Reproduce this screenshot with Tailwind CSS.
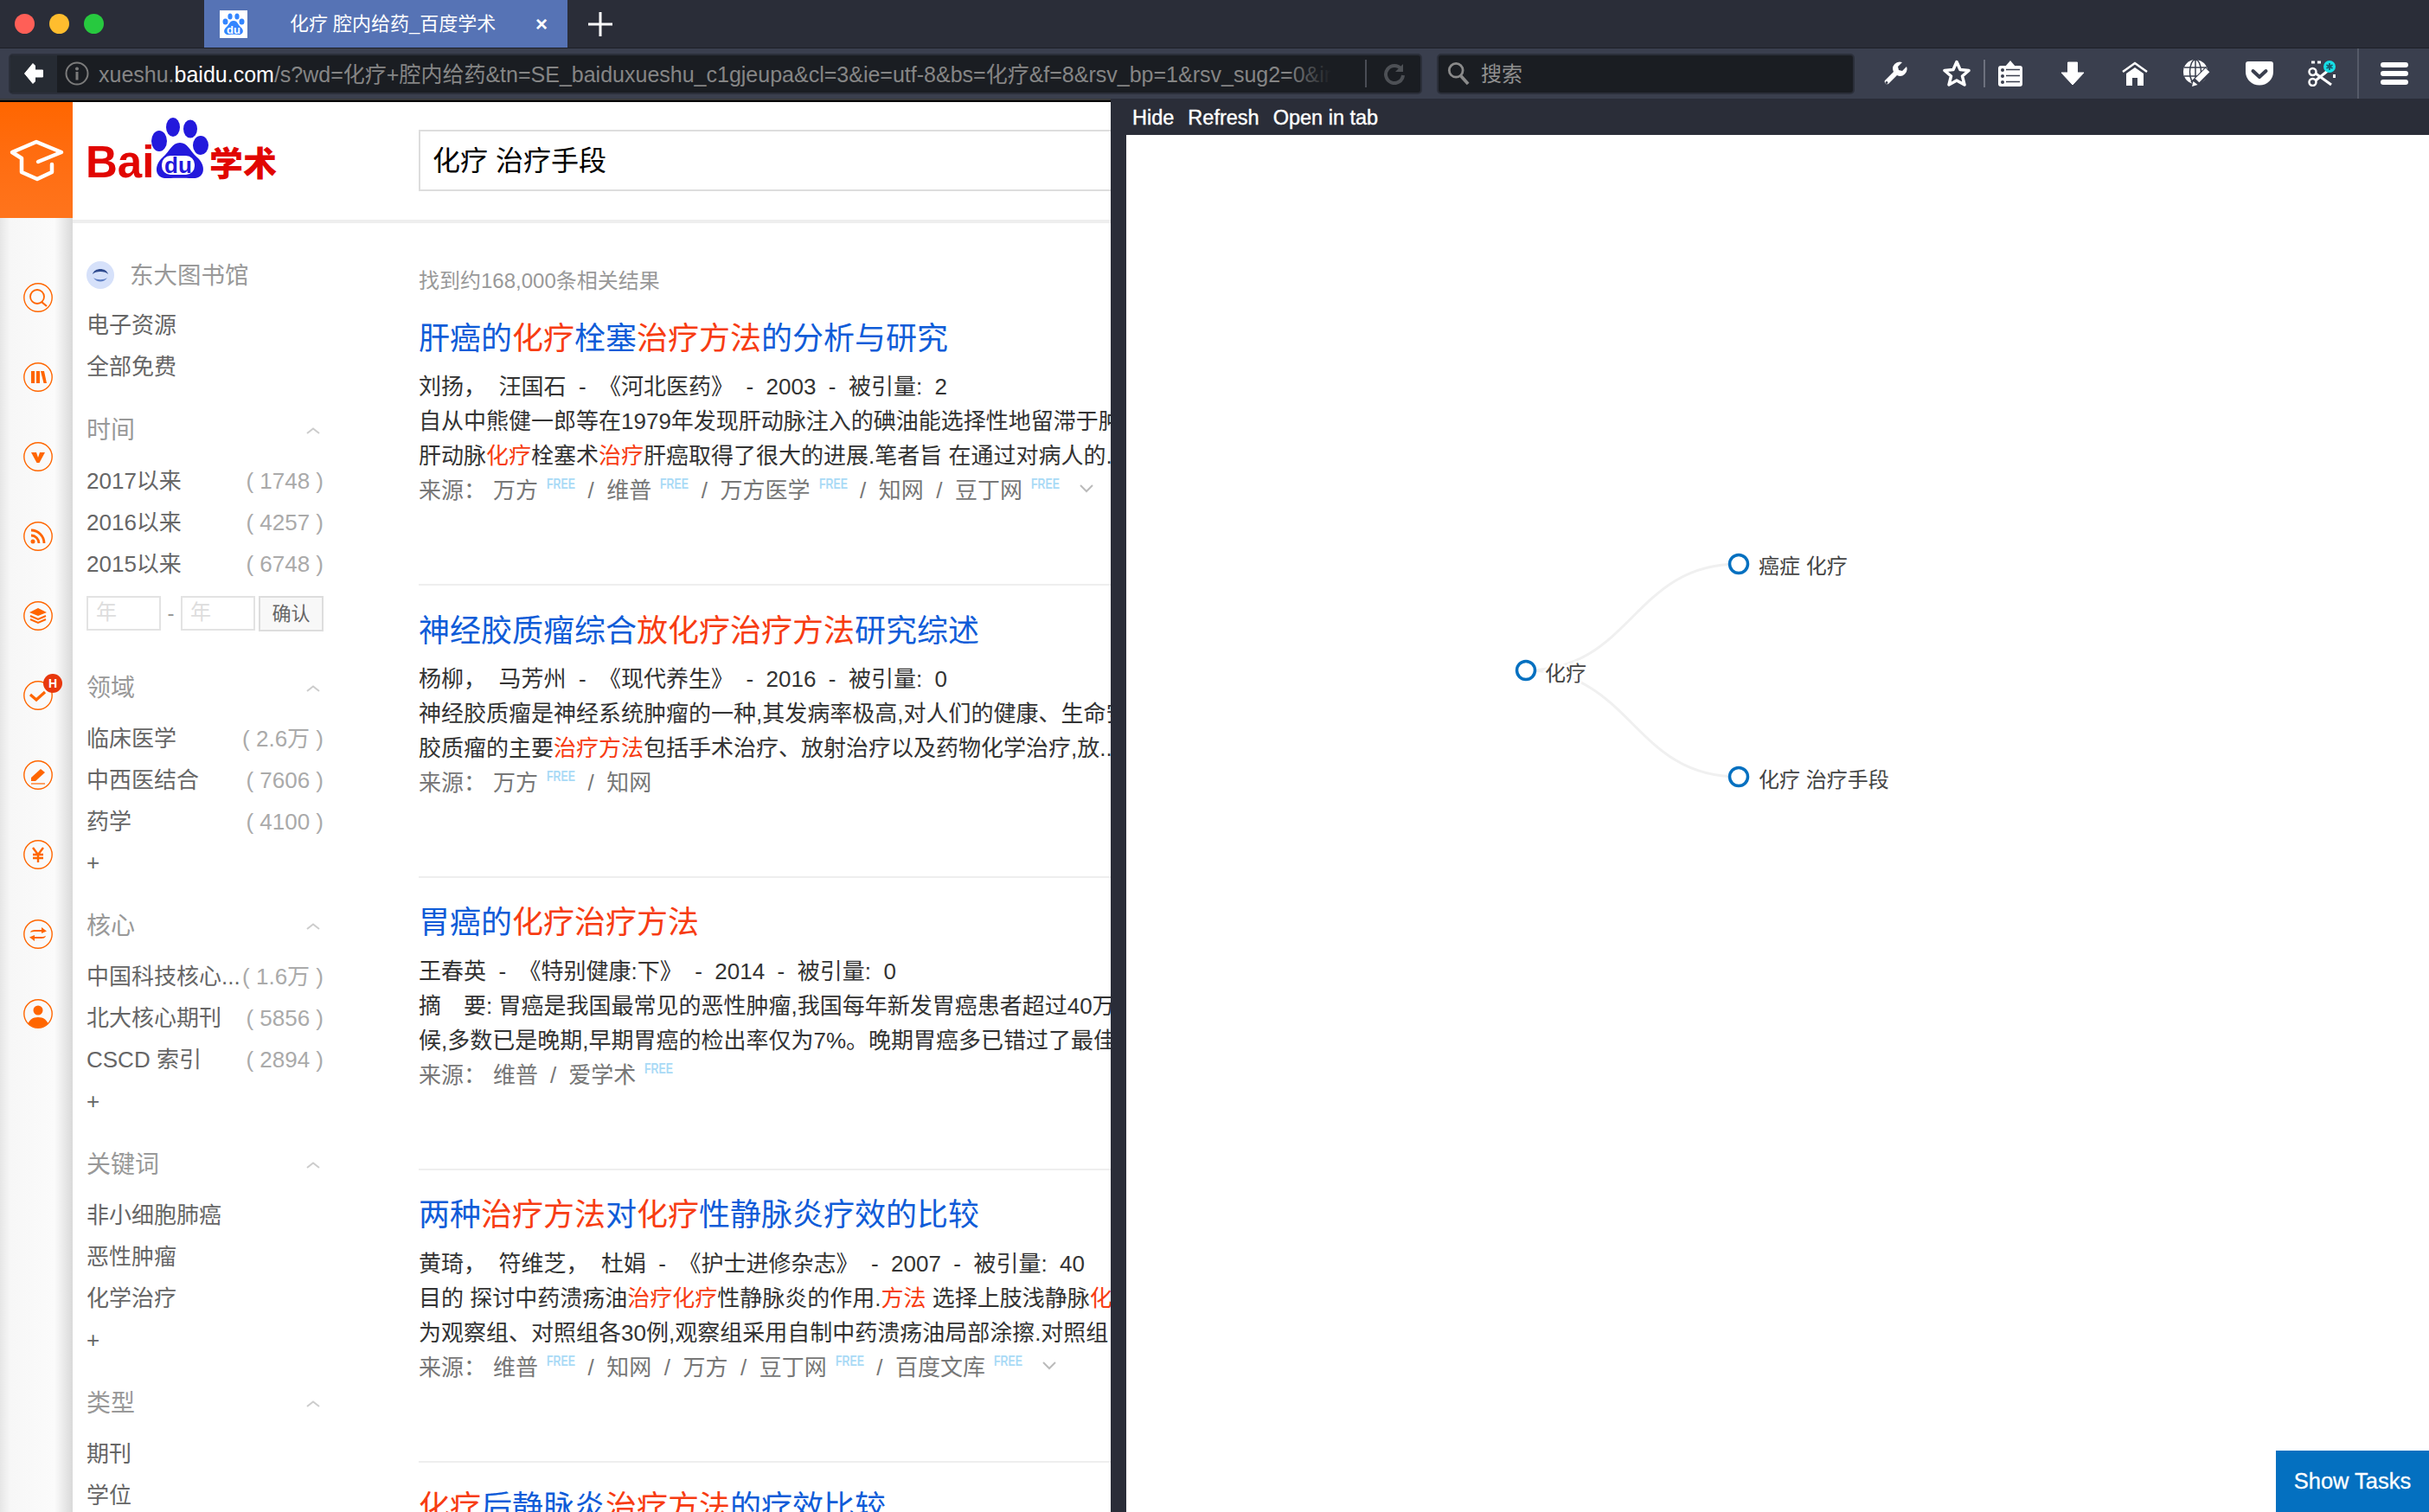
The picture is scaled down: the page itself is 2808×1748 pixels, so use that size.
<!DOCTYPE html>
<html lang="zh-CN">
<head>
  <meta charset="UTF-8">
  <title>化疗 腔内给药_百度学术</title>
  <script src="https://cdn.jsdelivr.net/npm/@tailwindcss/browser@4"></script>
</head>
<body class="w-[2808px] h-[1748px] overflow-hidden flex flex-col bg-white [font-family:'Liberation_Sans','Noto_Sans_CJK_SC',sans-serif]">

  <!-- Tab strip -->
  <div class="h-[56px] shrink-0 flex bg-[#2a2d38] border-b border-b-[#1d2028] border-t-0">
    <div class="flex items-center w-[236px] pl-[17px] gap-[17px]">
      <span class="w-[23px] h-[23px] rounded-full bg-[#ff5f57]"></span>
      <span class="w-[23px] h-[23px] rounded-full bg-[#ffbd2e]"></span>
      <span class="w-[23px] h-[23px] rounded-full bg-[#27c93f]"></span>
    </div>
    <div class="w-[420px] h-[55px] bg-[#5673b5] flex items-center text-white text-[22px]">
      <div class="ml-[18px] w-[32px] h-[32px] bg-white">
        <svg viewBox="0 0 32 32" class="w-[32px] h-[32px]">
          <ellipse cx="12" cy="7" rx="2.6" ry="3.6" fill="#3385ff"/>
          <ellipse cx="20" cy="7" rx="2.6" ry="3.6" fill="#3385ff"/>
          <ellipse cx="6.5" cy="13" rx="3" ry="3.6" fill="#3385ff"/>
          <ellipse cx="25.5" cy="13" rx="3" ry="3.6" fill="#3385ff"/>
          <path d="M16 12 C21 12 21 17 25 20 C29 24 26 29 21 28 C18 27.500 14 27.500 11 28 C6 29 3 24 7 20 C11 17 11 12 16 12Z" fill="#3385ff"/>
          <text x="16" y="26.500" text-anchor="middle" font-size="13" font-weight="700" fill="#fff">du</text>
        </svg>
      </div>
      <span class="ml-[49px] w-[236px] whitespace-nowrap">化疗 腔内给药_百度学术</span>
      <span class="ml-[48px] font-bold text-[24px] leading-none">×</span>
    </div>
    <svg viewBox="0 0 28 28" class="ml-[24px] mt-[14px] w-[28px] h-[28px]"><path d="M14 0V28M0 14H28" stroke="#fff" stroke-width="3"/></svg>
  </div>

  <!-- Navigation toolbar -->
  <div class="h-[58px] shrink-0 flex items-center bg-[#3a3f4e] pl-[10px]">
    <div class="w-[1634px] h-[47px] flex items-center bg-[#1a1d22] border-2 border-[#2b2f3a] rounded-[5px] overflow-hidden">
      <div class="w-[54px] h-full shrink-0 flex items-center justify-center bg-[#262b33]">
        <svg viewBox="0 0 24 26" class="w-[24px] h-[26px]"><path d="M11 1.500 L1.500 13 L11 24.500 L13.500 22 V17 H22.500 V9 H13.500 V4Z" fill="#fff" stroke="#fff" stroke-linejoin="round"/></svg>
      </div>
      <svg viewBox="0 0 28 28" class="ml-[9px] shrink-0 w-[28px] h-[28px]">
        <circle cx="14" cy="14" r="12.500" fill="none" stroke="#7b7b7b" stroke-width="2"/>
        <circle cx="14" cy="8.500" r="2" fill="#7b7b7b"/>
        <rect x="12.500" y="12" width="3" height="9.500" fill="#7b7b7b"/>
      </svg>
      <div class="relative ml-[11px] w-[1425px] shrink-0 overflow-hidden whitespace-nowrap text-[25px] leading-[40px] pt-[1px] text-[#858585]">
        xueshu.<span class="text-white">baidu.com</span>/s?wd=化疗+腔内给药&amp;tn=SE_baiduxueshu_c1gjeupa&amp;cl=3&amp;ie=utf-8&amp;bs=化疗&amp;f=8&amp;rsv_bp=1&amp;rsv_sug2=0&amp;inputT=2
        <div class="absolute top-0 right-0 w-[50px] h-full bg-gradient-to-r from-[#1a1d22]/0 to-[#1a1d22]"></div>
      </div>
      <div class="ml-[39px] w-[2px] h-[32px] shrink-0 bg-[#4a4d55]"></div>
      <svg viewBox="0 0 26 26" class="ml-[19px] shrink-0 w-[26px] h-[26px]"><path d="M21 8 A10 10 0 1 0 23 15" fill="none" stroke="#4d5055" stroke-width="4"/><path d="M23 2V11H14Z" fill="#4d5055"/></svg>
    </div>
    <div class="ml-[17px] w-[483px] h-[47px] flex items-center bg-[#1a1d22] border-2 border-[#2b2f3a] rounded-[5px]">
      <svg viewBox="0 0 28 30" class="ml-[10px] w-[26px] h-[28px]"><circle cx="11" cy="11" r="8.500" fill="none" stroke="#8a8a8a" stroke-width="3"/><path d="M17 18L26 28" stroke="#8a8a8a" stroke-width="4"/></svg>
      <span class="ml-[13px] pt-[2px] text-[24px] text-[#8f8f8f]">搜索</span>
    </div>
    <svg viewBox="0 0 28 28" class="ml-[33px] w-[28px] h-[28px]"><path fill-rule="evenodd" d="M2 22 L12 12 A8 8 0 0 1 22 1 L17 6 L18 10 L22 11 L27 6 A8 8 0 0 1 16 16 L6 26 A3 3 0 0 1 2 22Z M4 23 A1.500 1.500 0 1 0 4.010 23Z" fill="#fff"/></svg>
    <svg viewBox="0 0 32 32" class="ml-[41px] w-[32px] h-[32px]"><polygon points="16,2.500 20,11.500 30,12.500 22.500,19 25,29 16,24 7,29 9.500,19 2,12.500 12,11.500" fill="none" stroke="#fff" stroke-width="3.500" stroke-linejoin="round"/></svg>
    <div class="ml-[15px] w-[2px] h-[32px] bg-[#6d717e]"></div>
    <svg viewBox="0 0 28 30" class="ml-[15px] w-[28px] h-[30px]">
      <rect y="6" width="28" height="24" rx="3" fill="#fff"/><path d="M8 7L14 0L20 7Z" fill="#fff"/>
      <path d="M9 10.500H25M9 17.500H25M9 24.500H25" stroke="#3a3f4e" stroke-width="1.500"/>
      <circle cx="5" cy="11" r="2" fill="#3a3f4e"/><circle cx="5" cy="18" r="2" fill="#3a3f4e"/><circle cx="5" cy="25" r="2" fill="#3a3f4e"/>
    </svg>
    <svg viewBox="0 0 28 28" class="ml-[44px] w-[28px] h-[28px]"><path d="M8.500 1H19.500V13H27L14 27L1 13H8.500Z" fill="#fff" stroke="#fff" stroke-linejoin="round"/></svg>
    <svg viewBox="0 0 30 28" class="ml-[43px] w-[30px] h-[28px]">
      <path d="M1 12L15 2L29 12" fill="none" stroke="#fff" stroke-width="2.500"/>
      <path d="M5 14L15 7L25 14V28H18V19H12V28H5Z" fill="#fff"/>
    </svg>
    <svg viewBox="0 0 32 32" class="ml-[41px] w-[32px] h-[32px]">
      <circle cx="14" cy="14" r="14" fill="#fff"/>
      <g fill="none" stroke="#3a3f4e" stroke-width="1.500"><ellipse cx="14" cy="14" rx="6.500" ry="14"/><path d="M14 0V28M1 9H27M1 19H27"/></g>
      <path d="M29 12L12 29" stroke="#3a3f4e" stroke-width="10"/>
      <path d="M28 12L16 24" stroke="#fff" stroke-width="6.500"/>
      <path d="M11.500 25L10 31L16.500 29Z" fill="#fff"/>
    </svg>
    <svg viewBox="0 0 32 28" class="ml-[40px] w-[32px] h-[28px]">
      <path d="M3 0H29A3 3 0 0 1 32 3V12A16 15.500 0 0 1 0 12V3A3 3 0 0 1 3 0Z" fill="#fff"/>
      <path d="M8.500 11L16 18L23.500 11" fill="none" stroke="#3a3f4e" stroke-width="4" stroke-linecap="round" stroke-linejoin="round"/>
    </svg>
    <svg viewBox="0 0 32 30" class="ml-[40px] w-[32px] h-[30px]">
      <path d="M4 2H18M30.500 16V22" fill="none" stroke="#fff" stroke-width="3" stroke-dasharray="4 3"/>
      <g fill="none" stroke="#fff"><circle cx="5.500" cy="13" r="4" stroke-width="2.500"/><circle cx="5.500" cy="25" r="4" stroke-width="2.500"/><path d="M9 15L27 28M9 23L24 11" stroke-width="3"/></g>
      <circle cx="25" cy="7" r="7" fill="#16dfe6"/>
      <path d="M25 3V11M21.500 5L28.500 9M28.500 5L21.500 9" stroke="#1c5a6a" stroke-width="1.800"/>
    </svg>
    <div class="ml-[25px] w-[2px] h-full bg-[#555a68]"></div>
    <div class="ml-[25px] flex flex-col gap-[4px]">
      <div class="w-[32px] h-[6px] rounded-[3px] bg-white"></div>
      <div class="w-[32px] h-[6px] rounded-[3px] bg-white"></div>
      <div class="w-[32px] h-[6px] rounded-[3px] bg-white"></div>
    </div>
  </div>

  <div class="flex-1 flex min-h-0">

    <!-- Web page -->
    <div class="w-[1284px] shrink-0 flex flex-col overflow-hidden">
      <div class="h-[2px] shrink-0 bg-[#3a3a3a]"></div>
      <div class="h-[2px] shrink-0 bg-black"></div>
      <div class="flex-1 flex min-h-0">

        <!-- Icon rail -->
        <div class="w-[84px] shrink-0 bg-[linear-gradient(90deg,#e6e6e6,#f7f7f7_14%,#fbfbfb_75%,#d9d9d9)]">
          <div class="h-[134px] flex items-center justify-center bg-gradient-to-b from-[#ff6600] to-[#ff741c]">
            <svg viewBox="10 42 64 50" class="w-[64px] h-[50px]"><path d="M44 69L71 58L42 46L14 58L25 65V81L43 89L60 81V72" fill="none" stroke="#fff" stroke-width="4.500" stroke-linecap="round" stroke-linejoin="round"/></svg>
          </div>
          <div class="flex flex-col items-center gap-[58px] pt-[75px] pl-[4px]">
            <svg viewBox="0 0 34 34" class="w-[34px] h-[34px]"><circle cx="17" cy="17" r="16.200" fill="none" stroke="#ff6600" stroke-width="1.400"/><circle cx="16" cy="16" r="8" fill="none" stroke="#ff6600" stroke-width="1.800"/><path d="M21 22L27 27" stroke="#ff6600" stroke-width="2.200"/></svg>
            <svg viewBox="0 0 34 34" class="w-[34px] h-[34px]"><circle cx="17" cy="17" r="16.200" fill="none" stroke="#ff6600" stroke-width="1.400"/><path d="M9 10H13V24H9ZM15 10H19V24H15ZM20 10H24L27 24H23.500Z" fill="#ff6600"/></svg>
            <svg viewBox="0 0 34 34" class="w-[34px] h-[34px]"><circle cx="17" cy="17" r="16.200" fill="none" stroke="#ff6600" stroke-width="1.400"/><path d="M9 12H15L17 18L19 12H25L18.500 24H15.500Z" fill="#ff6600"/></svg>
            <svg viewBox="0 0 34 34" class="w-[34px] h-[34px]"><circle cx="17" cy="17" r="16.200" fill="none" stroke="#ff6600" stroke-width="1.400"/><circle cx="11" cy="23" r="2.500" fill="#ff6600"/><path d="M9 16A9 9 0 0 1 18 25M9 10A15 15 0 0 1 24 25" fill="none" stroke="#ff6600" stroke-width="2.800"/></svg>
            <svg viewBox="0 0 34 34" class="w-[34px] h-[34px]"><circle cx="17" cy="17" r="16.200" fill="none" stroke="#ff6600" stroke-width="1.400"/><path d="M17 8L27 13L17 17L7 13Z" fill="#ff6600"/><path d="M8 17L17 21L26 17M8 21L17 25L26 21" fill="none" stroke="#ff6600" stroke-width="2"/></svg>
            <div class="relative w-[34px] h-[34px]">
              <svg viewBox="0 0 34 34" class="w-[34px] h-[34px]"><circle cx="17" cy="17" r="16.200" fill="none" stroke="#ff6600" stroke-width="1.400"/><path d="M8 16L15 22L25 13" fill="none" stroke="#ff6600" stroke-width="3.200"/></svg>
              <span class="absolute left-[23px] -top-[8px] w-[22px] h-[22px] rounded-full bg-[#e8380d] text-white text-[14px] font-bold leading-[22px] text-center">H</span>
            </div>
            <svg viewBox="0 0 34 34" class="w-[34px] h-[34px]"><circle cx="17" cy="17" r="16.200" fill="none" stroke="#ff6600" stroke-width="1.400"/><path d="M9 20L20 10L25 14L14 24H9Z" fill="#ff6600"/><path d="M9 27H25" stroke="#ff6600" stroke-width="1.200"/></svg>
            <svg viewBox="0 0 34 34" class="w-[34px] h-[34px]"><circle cx="17" cy="17" r="16.200" fill="none" stroke="#ff6600" stroke-width="1.400"/><path d="M11 9L17 17L23 9M17 17V26M11 17H23M11 21H23" fill="none" stroke="#ff6600" stroke-width="2.400"/></svg>
            <svg viewBox="0 0 34 34" class="w-[34px] h-[34px]"><circle cx="17" cy="17" r="16.200" fill="none" stroke="#ff6600" stroke-width="1.400"/><path d="M8 15C9 12 12 12 15 12H21V9L27 13.500L21 16V14H15C12 14 10 14 8 15ZM26 19C25 22 22 22 19 22H13V25L7 20.500L13 18V20H19C22 20 24 20 26 19Z" fill="#ff6600"/></svg>
            <svg viewBox="0 0 34 34" class="w-[34px] h-[34px]"><defs><clipPath id="userClip"><circle cx="17" cy="17" r="16"/></clipPath></defs><circle cx="17" cy="17" r="16.200" fill="none" stroke="#ff6600" stroke-width="1.400"/><circle cx="17" cy="13" r="5.500" fill="#ff6600"/><path d="M4 34C5 24 11 21 17 21C23 21 29 24 30 34Z" fill="#ff6600" clip-path="url(#userClip)"/></svg>
          </div>
        </div>

        <div class="flex-1 flex flex-col min-w-0">
          <!-- Header -->
          <div class="h-[140px] shrink-0 flex border-b-4 border-b-[#eeeeee]">
            <svg viewBox="84 118 400 136" class="w-[400px] h-[136px] shrink-0">
              <text x="99" y="205" font-size="51" font-weight="700" fill="#e10602">Bai</text>
              <ellipse cx="200" cy="147" rx="8" ry="11" fill="#2319dc"/>
              <ellipse cx="220" cy="149" rx="8" ry="10.500" fill="#2319dc"/>
              <ellipse cx="184" cy="163" rx="9" ry="12" fill="#2319dc"/>
              <ellipse cx="232" cy="168" rx="9" ry="11" fill="#2319dc"/>
              <path d="M208 165C217 165 219 174 228 182C239 192 237 207 222 206C214 205.500 202 205.500 194 206C179 207 177 192 188 182C197 174 199 165 208 165Z" fill="#2319dc"/>
              <rect x="187" y="180" width="38" height="22" rx="10" fill="#fff"/>
              <text x="206" y="200" text-anchor="middle" font-size="26" font-weight="700" fill="#2319dc">du</text>
              <text x="242" y="203" font-size="39" font-weight="900" fill="#e10602">学术</text>
            </svg>
            <div class="mt-[32px] w-[900px] h-[71px] shrink-0 border-2 border-[#dddddd] pl-[14px] text-[32px] leading-[69px] text-black whitespace-nowrap">化疗 治疗手段</div>
          </div>

          <div class="flex-1 flex min-h-0">
            <!-- Filters -->
            <div class="w-[400px] shrink-0 pl-[16px] pr-[110px] pt-[36px] text-[26px] text-[#666666] leading-[48px]">
              <div class="h-[48px] flex items-center">
                <svg viewBox="0 0 32 32" class="w-[32px] h-[32px]"><circle cx="16" cy="16" r="16" fill="#d6e1fa"/><path d="M7 15C9 7 23 7 25 15C22 11 10 11 7 15Z" fill="#2f4b8f"/><path d="M8 19C12 25 20 25 24 19C20 22 12 22 8 19Z" fill="#5f7fc4"/></svg>
                <span class="ml-[18px] pt-[2px] text-[27.500px] text-[#999999]">东大图书馆</span>
              </div>
              <div class="h-[48px] mt-[10px]">电子资源</div>
              <div class="h-[48px]">全部免费</div>

              <div class="h-[48px] mt-[26px] flex items-center justify-between text-[#999999] text-[28px]">时间
                <svg viewBox="0 0 16 8" class="mr-[4px] w-[16px] h-[8px]"><path d="M1 7L8 1.500L15 7" fill="none" stroke="#cccccc" stroke-width="2"/></svg>
              </div>
              <div class="h-[48px] mt-[10px] flex justify-between"><span>2017以来</span><span class="text-[#aaaaaa]">( 1748 )</span></div>
              <div class="h-[48px] flex justify-between"><span>2016以来</span><span class="text-[#aaaaaa]">( 4257 )</span></div>
              <div class="h-[48px] flex justify-between"><span>2015以来</span><span class="text-[#aaaaaa]">( 6748 )</span></div>
              <div class="mt-[13px] h-[40px] flex items-center">
                <div class="w-[86px] h-[40px] border-2 border-[#e3e3e3] pl-[9px] text-[24px] leading-[34px] text-[#dddddd]">年</div>
                <span class="w-[23px] text-center text-[24px] leading-[36px] text-[#999999]">-</span>
                <div class="w-[86px] h-[40px] border-2 border-[#e3e3e3] pl-[9px] text-[24px] leading-[34px] text-[#dddddd]">年</div>
                <div class="ml-[4px] w-[75px] h-[41px] border-2 border-[#dddddd] bg-[#f8f8f8] text-center text-[22px] leading-[38px] text-[#666666]">确认</div>
              </div>

              <div class="h-[48px] mt-[43px] flex items-center justify-between text-[28px] text-[#999999]">领域
                <svg viewBox="0 0 16 8" class="mr-[4px] w-[16px] h-[8px]"><path d="M1 7L8 1.500L15 7" fill="none" stroke="#cccccc" stroke-width="2"/></svg>
              </div>
              <div class="h-[48px] mt-[10px] flex justify-between"><span>临床医学</span><span class="text-[#aaaaaa]">( 2.6万 )</span></div>
              <div class="h-[48px] flex justify-between"><span>中西医结合</span><span class="text-[#aaaaaa]">( 7606 )</span></div>
              <div class="h-[48px] flex justify-between"><span>药学</span><span class="text-[#aaaaaa]">( 4100 )</span></div>
              <div class="h-[48px] -mt-[1px]">+</div>

              <div class="h-[48px] mt-[26px] flex items-center justify-between text-[28px] text-[#999999]">核心
                <svg viewBox="0 0 16 8" class="mr-[4px] w-[16px] h-[8px]"><path d="M1 7L8 1.500L15 7" fill="none" stroke="#cccccc" stroke-width="2"/></svg>
              </div>
              <div class="h-[48px] mt-[10px] flex justify-between"><span>中国科技核心...</span><span class="text-[#aaaaaa]">( 1.6万 )</span></div>
              <div class="h-[48px] flex justify-between"><span>北大核心期刊</span><span class="text-[#aaaaaa]">( 5856 )</span></div>
              <div class="h-[48px] flex justify-between"><span>CSCD 索引</span><span class="text-[#aaaaaa]">( 2894 )</span></div>
              <div class="h-[48px]">+</div>

              <div class="h-[48px] mt-[26px] flex items-center justify-between text-[28px] text-[#999999]">关键词
                <svg viewBox="0 0 16 8" class="mr-[4px] w-[16px] h-[8px]"><path d="M1 7L8 1.500L15 7" fill="none" stroke="#cccccc" stroke-width="2"/></svg>
              </div>
              <div class="h-[48px] mt-[10px]">非小细胞肺癌</div>
              <div class="h-[48px]">恶性肿瘤</div>
              <div class="h-[48px]">化学治疗</div>
              <div class="h-[48px]">+</div>

              <div class="h-[48px] mt-[26px] flex items-center justify-between text-[28px] text-[#999999]">类型
                <svg viewBox="0 0 16 8" class="mr-[4px] w-[16px] h-[8px]"><path d="M1 7L8 1.500L15 7" fill="none" stroke="#cccccc" stroke-width="2"/></svg>
              </div>
              <div class="h-[48px] mt-[10px]">期刊</div>
              <div class="h-[48px]">学位</div>
            </div>

            <!-- Results -->
            <div class="flex-1 min-w-0 overflow-hidden whitespace-nowrap text-[26px] leading-[40px] text-[#333333]">
              <div class="mt-[48px] mb-[25px] h-[36px] text-[24px] leading-[38px] text-[#999999]">找到约168,000条相关结果</div>

              <div class="h-[48px] text-[36px] leading-[50px] text-[#0f5cd8]">肝癌的<span class="text-[#f73c12]">化疗</span>栓塞<span class="text-[#f73c12]">治疗方法</span>的分析与研究</div>
              <div class="mt-[12px] h-[40px]">刘扬，&nbsp;&nbsp;汪国石&nbsp;&nbsp;-&nbsp;&nbsp;《河北医药》&nbsp;&nbsp;-&nbsp;&nbsp;2003&nbsp;&nbsp;-&nbsp;&nbsp;被引量:&nbsp;&nbsp;2</div>
              <div class="h-[40px]">自从中熊健一郎等在1979年发现肝动脉注入的碘油能选择性地留滞于肿瘤</div>
              <div class="h-[40px]">肝动脉<span class="text-[#f73c12]">化疗</span>栓塞术<span class="text-[#f73c12]">治疗</span>肝癌取得了很大的进展.笔者旨 在通过对病人的...</div>
              <div class="h-[40px] text-[#777777]">来源：<span class="ml-[8px]">万方</span><span class="inline-block ml-[10px] w-[33px] scale-x-[0.77] origin-left text-[16px] leading-none align-[11px] font-bold text-[#a9daf6]">FREE</span><span class="mx-[14.500px]">/</span>维普<span class="inline-block ml-[10px] w-[33px] scale-x-[0.77] origin-left text-[16px] leading-none align-[11px] font-bold text-[#a9daf6]">FREE</span><span class="mx-[14.500px]">/</span>万方医学<span class="inline-block ml-[10px] w-[33px] scale-x-[0.77] origin-left text-[16px] leading-none align-[11px] font-bold text-[#a9daf6]">FREE</span><span class="mx-[14.500px]">/</span>知网<span class="mx-[14.500px]">/</span>豆丁网<span class="inline-block ml-[10px] w-[33px] scale-x-[0.77] origin-left text-[16px] leading-none align-[11px] font-bold text-[#a9daf6]">FREE</span><svg viewBox="0 0 16 10" class="inline-block ml-[23px] w-[16px] h-[10px] align-[6px]"><path d="M1 1L8 8L15 1" fill="none" stroke="#bbbbbb" stroke-width="2"/></svg></div>
              <div class="mt-[88px] mb-[28px] h-[2px] bg-[#eeeeee]"></div>

              <div class="h-[48px] text-[36px] leading-[50px] text-[#0f5cd8]">神经胶质瘤综合<span class="text-[#f73c12]">放化疗治疗方法</span>研究综述</div>
              <div class="mt-[12px] h-[40px]">杨柳，&nbsp;&nbsp;马芳州&nbsp;&nbsp;-&nbsp;&nbsp;《现代养生》&nbsp;&nbsp;-&nbsp;&nbsp;2016&nbsp;&nbsp;-&nbsp;&nbsp;被引量:&nbsp;&nbsp;0</div>
              <div class="h-[40px]">神经胶质瘤是神经系统肿瘤的一种,其发病率极高,对人们的健康、生命安全</div>
              <div class="h-[40px]">胶质瘤的主要<span class="text-[#f73c12]">治疗方法</span>包括手术治疗、放射治疗以及药物化学治疗,放...</div>
              <div class="h-[40px] text-[#777777]">来源：<span class="ml-[8px]">万方</span><span class="inline-block ml-[10px] w-[33px] scale-x-[0.77] origin-left text-[16px] leading-none align-[11px] font-bold text-[#a9daf6]">FREE</span><span class="mx-[14.500px]">/</span>知网</div>
              <div class="mt-[88px] mb-[28px] h-[2px] bg-[#eeeeee]"></div>

              <div class="h-[48px] text-[36px] leading-[48px] text-[#0f5cd8]">胃癌的<span class="text-[#f73c12]">化疗治疗方法</span></div>
              <div class="mt-[12px] h-[40px]">王春英&nbsp;&nbsp;-&nbsp;&nbsp;《特别健康:下》&nbsp;&nbsp;-&nbsp;&nbsp;2014&nbsp;&nbsp;-&nbsp;&nbsp;被引量:&nbsp;&nbsp;0</div>
              <div class="h-[40px]">摘　要: 胃癌是我国最常见的恶性肿瘤,我国每年新发胃癌患者超过40万</div>
              <div class="h-[40px]">候,多数已是晚期,早期胃癌的检出率仅为7%。晚期胃癌多已错过了最佳</div>
              <div class="h-[40px] text-[#777777]">来源：<span class="ml-[8px]">维普</span><span class="mx-[14px]">/</span>爱学术<span class="inline-block ml-[10px] w-[33px] scale-x-[0.77] origin-left text-[16px] leading-none align-[11px] font-bold text-[#a9daf6]">FREE</span></div>
              <div class="mt-[88px] mb-[28px] h-[2px] bg-[#eeeeee]"></div>

              <div class="h-[48px] text-[36px] leading-[48px] text-[#0f5cd8]">两种<span class="text-[#f73c12]">治疗方法</span>对<span class="text-[#f73c12]">化疗</span>性静脉炎疗效的比较</div>
              <div class="mt-[12px] h-[40px]">黄琦，&nbsp;&nbsp;符维芝，&nbsp;&nbsp;杜娟&nbsp;&nbsp;-&nbsp;&nbsp;《护士进修杂志》&nbsp;&nbsp;-&nbsp;&nbsp;2007&nbsp;&nbsp;-&nbsp;&nbsp;被引量:&nbsp;&nbsp;40</div>
              <div class="h-[40px]">目的 探讨中药溃疡油<span class="text-[#f73c12]">治疗化疗</span>性静脉炎的作用.<span class="text-[#f73c12]">方法</span> 选择上肢浅静脉<span class="text-[#f73c12]">化疗</span></div>
              <div class="h-[40px]">为观察组、对照组各30例,观察组采用自制中药溃疡油局部涂擦.对照组</div>
              <div class="h-[40px] text-[#777777]">来源：<span class="ml-[8px]">维普</span><span class="inline-block ml-[10px] w-[33px] scale-x-[0.77] origin-left text-[16px] leading-none align-[11px] font-bold text-[#a9daf6]">FREE</span><span class="mx-[14.500px]">/</span>知网<span class="mx-[14.500px]">/</span>万方<span class="mx-[14.500px]">/</span>豆丁网<span class="inline-block ml-[10px] w-[33px] scale-x-[0.77] origin-left text-[16px] leading-none align-[11px] font-bold text-[#a9daf6]">FREE</span><span class="mx-[14.500px]">/</span>百度文库<span class="inline-block ml-[10px] w-[33px] scale-x-[0.77] origin-left text-[16px] leading-none align-[11px] font-bold text-[#a9daf6]">FREE</span><svg viewBox="0 0 16 10" class="inline-block ml-[23px] w-[16px] h-[10px] align-[6px]"><path d="M1 1L8 8L15 1" fill="none" stroke="#bbbbbb" stroke-width="2"/></svg></div>
              <div class="mt-[88px] mb-[28px] h-[2px] bg-[#eeeeee]"></div>

              <div class="h-[48px] text-[36px] leading-[48px] text-[#0f5cd8]"><span class="text-[#f73c12]">化疗</span>后静脉炎<span class="text-[#f73c12]">治疗方法</span>的疗效比较</div>
            </div>
          </div>
        </div>
      </div>
    </div>

    <!-- Side panel -->
    <div class="flex-1 flex flex-col bg-[#2a2d38] pl-[18px]">
      <div class="h-[42px] shrink-0 -ml-[18px] pl-[25px] pt-[4px] flex items-center gap-[16px] text-[23.500px] text-white [-webkit-text-stroke:0.4px_white]">
        <span>Hide</span><span>Refresh</span><span>Open in tab</span>
      </div>
      <div class="relative flex-1 bg-white">
        <svg viewBox="1302 156 1506 1592" class="w-full h-full">
          <g fill="none" stroke="#f0f0f0" stroke-width="3">
            <path d="M1764 775C1887 775 1887 652 2010 652"/>
            <path d="M1764 775C1887 775 1887 898 2010 898"/>
          </g>
          <g fill="#fff" stroke="#0470c0" stroke-width="3.500">
            <circle cx="1764" cy="775" r="10.500"/>
            <circle cx="2010" cy="652" r="10.500"/>
            <circle cx="2010" cy="898" r="10.500"/>
          </g>
          <g font-size="24" fill="#444444" class="[paint-order:stroke] stroke-white stroke-[5px]">
            <text x="1786" y="787">化疗</text>
            <text x="2033" y="663">癌症 化疗</text>
            <text x="2033" y="910">化疗 治疗手段</text>
          </g>
        </svg>
        <div class="absolute right-0 bottom-0 w-[177px] h-[71px] bg-[#0470c0] text-white text-[25.500px] leading-[71px] text-center [-webkit-text-stroke:0.3px_white]">Show Tasks</div>
      </div>
    </div>
  </div>
</body>
</html>
